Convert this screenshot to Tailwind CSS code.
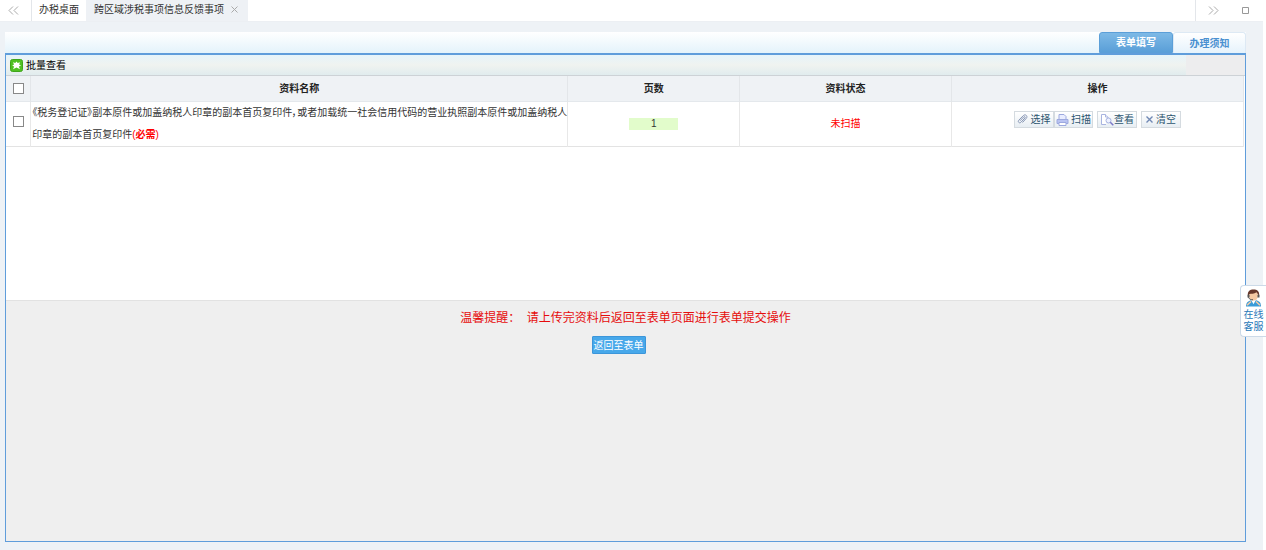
<!DOCTYPE html>
<html lang="zh-CN">
<head>
<meta charset="utf-8">
<meta name="viewport" content="width=device-width, initial-scale=1">
<title>跨区域涉税事项信息反馈事项</title>
<script src="https://cdn.jsdelivr.net/npm/@tailwindcss/browser@4"></script>
</head>
<body class="flex min-h-screen flex-col bg-[#eef2f6] font-['Liberation_Sans','Noto_Sans_CJK_SC',sans-serif] text-[10px] text-[#333]">
<div class="flex flex-1 flex-col border-r-3 border-white">
<header class="flex h-[22px] shrink-0 items-stretch border-b border-[#eceff3] bg-white">
  <button type="button" aria-label="向左滚动" class="flex w-8 items-center justify-center border-r border-[#e3e6ea] pr-1">
    <svg class="h-[9px] w-[11px]" viewBox="0 0 11 9" fill="none" stroke="#aaa"><path d="M5 .5 1 4.5l4 4M10 .5 6 4.5l4 4"/></svg>
  </button>
  <nav class="flex flex-1">
    <a href="#desktop" class="flex w-[54px] items-center justify-center whitespace-nowrap pb-0.5">办税桌面</a>
    <div class="flex w-[162px] items-center justify-between bg-[#eef1f5] pb-0.5 pl-2 pr-2.5">
      <a href="#current" class="whitespace-nowrap">跨区域涉税事项信息反馈事项</a>
      <button type="button" aria-label="关闭"><svg class="size-[7px]" viewBox="0 0 7 7" stroke="#aaa"><path d="m.5.5 6 6m0-6-6 6"/></svg></button>
    </div>
  </nav>
  <div class="flex w-[68px] items-center justify-between border-l border-[#e3e6ea] pl-3 pr-3.5">
    <button type="button" aria-label="向右滚动"><svg class="h-[9px] w-[11px]" viewBox="0 0 11 9" fill="none" stroke="#aaa"><path d="m1 .5 4 4-4 4M6 .5l4 4-4 4"/></svg></button>
    <button type="button" aria-label="最大化"><svg class="size-[7px]" viewBox="0 0 7 7" fill="none" stroke="#999"><path d="M.5.5h6v6h-6z"/></svg></button>
  </div>
</header>

<main class="ml-[5px] mr-[17px] mt-2.5 mb-2 flex flex-1 flex-col">
  <div class="flex h-[21px] items-stretch justify-end bg-linear-to-b from-white to-[#e4f3fb] font-['Liberation_Serif','Noto_Sans_CJK_SC',serif] font-bold">
    <button type="button" class="w-[74px] rounded-t-[3px] border border-[#5b9fd8] bg-linear-to-b from-[#7db9e6] to-[#5a9fd8] text-white">表单填写</button>
    <button type="button" class="w-[73px] rounded-t-[3px] border border-b-0 border-[#dde9f4] bg-linear-to-b from-white to-[#e6f3fc] text-[#4a90d0]">办理须知</button>
  </div>
  <section class="flex flex-1 flex-col border border-t-2 border-[#5f9ddb] bg-[#efefef]">
    <div class="flex h-[21px] border-b border-[#cdd2d6]">
      <div class="flex flex-1 items-center bg-linear-to-b from-[#e6f4fa] via-[#f0f3f0] to-[#e1ecee] pl-1">
        <button type="button" class="flex items-center gap-[3px] text-black">
          <svg class="size-[13px]" viewBox="0 0 13 13"><rect x=".5" y=".5" width="12" height="12" rx="2" fill="#4fc022" stroke="#3fa51c"/><path d="M3 3.200 5.300 4 6.500 2.400 7.700 4 10 3.200 9.200 5.500 11 6.700 8.800 7.500 10 10.300 6.500 8.500 3 10.300 4.200 7.500 2.200 6.700 4 5.500z" fill="#fff"/></svg>
          批量查看
        </button>
      </div>
      <div class="w-[59px] shrink-0 bg-[#ededee]"></div>
    </div>
    <div class="min-h-[225px] border-b border-[#e2e2e2] bg-white pr-px">
      <table class="w-full table-fixed border-collapse">
        <colgroup><col class="w-[2%]"><col class="w-[43.4%]"><col class="w-[13.9%]"><col class="w-[17.1%]"><col></colgroup>
        <thead>
          <tr class="h-[25px] border-b border-[#e4e8ec] bg-[#eff2f5] text-[#222]">
            <th class="border-r border-[#e3e6e9]"><input type="checkbox" aria-label="全选" class="mx-auto block size-[11px] appearance-none border border-[#888] bg-white checked:bg-[#4a90d0]"></th>
            <th class="border-r border-[#e3e6e9]">资料名称</th>
            <th class="border-r border-[#e3e6e9]">页数</th>
            <th class="border-r border-[#e3e6e9]">资料状态</th>
            <th class="border-r border-[#e3e6e9]">操作</th>
          </tr>
        </thead>
        <tbody>
          <tr class="h-[45px] border-b border-[#e3e3e3]">
            <td class="border-r border-[#e8e8e8] pb-1"><input type="checkbox" aria-label="选择此资料" class="mx-auto block size-[11px] appearance-none border border-[#888] bg-white checked:bg-[#4a90d0]"></td>
            <td class="whitespace-nowrap border-r border-[#e8e8e8] pl-px leading-[22px]"><span class="[font-feature-settings:'palt']">《税务登记证》副本原件或加盖纳税人印章的副本首页复印件，或者加载统一社会信用代码的营业执照副本原件或加盖纳税人</span><br>印章的副本首页复印件<span class="text-[#f00]">(<b>必需</b>)</span></td>
            <td class="border-r border-[#e8e8e8]"><input type="text" value="1" aria-label="页数" class="mx-auto block h-3 w-[49px] bg-[#e2fccb] text-center text-[10px]"></td>
            <td class="border-r border-[#e8e8e8] text-center text-[#f00]">未扫描</td>
            <td class="border-r border-[#e8e8e8] pb-2">
              <div class="flex justify-center text-[#2d5570]">
                <button type="button" class="flex h-[17px] w-10 items-center justify-center gap-0.5 border border-[#d5dbe0] bg-linear-to-b from-white to-[#e8eef3]">
                  <svg class="size-[11px] shrink-0" viewBox="0 0 11 11" fill="none" stroke="#8796b5"><path d="M3 6.800 6.700 3c1-1 2.100.1 1.200 1L4 8.200C2.500 9.800.3 7.800 1.800 6.200L6.300 1.600c2-2 4.900.5 3 2.700L5.500 8.500"/></svg>选择</button>
                <button type="button" class="flex h-[17px] w-[39px] items-center justify-center gap-0.5 border border-[#d5dbe0] bg-linear-to-b from-white to-[#e8eef3]">
                  <svg class="h-3 w-[13px] shrink-0" viewBox="0 0 13 12" fill="#e9edff" stroke="#9da9df"><path d="M3 6V.5h5L10 2.500V6"/><path d="M1 5.500h11v4H1z" fill="#b9c3f2"/><path d="M3 8.500h7v3H3z" fill="#fff"/></svg>扫描</button>
                <button type="button" class="ml-1 flex h-[17px] w-10 items-center justify-center border border-[#d5dbe0] bg-linear-to-b from-white to-[#e8eef3]">
                  <svg class="h-3 w-[14px] shrink-0" viewBox="0 0 14 12" fill="#fff" stroke="#a8b4e0"><path d="M6 10.500H1.500V.5h4L8 3v2"/><path d="M5.500.5V3H8"/><circle cx="8.500" cy="6.500" r="2.500" fill="#edf1ff"/><path d="m10.300 8.300 3 3" stroke="#7b78c8" stroke-width="1.500"/></svg>查看</button>
                <button type="button" class="ml-1 flex h-[17px] w-10 items-center justify-center gap-[3px] border border-[#d5dbe0] bg-linear-to-b from-white to-[#e8eef3]">
                  <svg class="size-[7px] shrink-0" viewBox="0 0 7 7" stroke="#7189b5" stroke-width="1.400"><path d="m.5.5 6 6m0-6-6 6"/></svg>清空</button>
              </div>
            </td>
          </tr>
        </tbody>
      </table>
    </div>
    <div class="flex flex-col items-center pt-2">
      <p class="text-xs leading-[18px] text-[#e60c0c]">温馨提醒：&nbsp; 请上传完资料后返回至表单页面进行表单提交操作</p>
      <button type="button" class="mt-[9px] mr-3.5 h-[18px] w-[54px] rounded-[1px] border border-[#3c96da] bg-[#47a8ea] text-white">返回至表单</button>
    </div>
  </section>
</main>
</div>

<a href="#service" class="fixed right-0 top-[285px] flex w-[26px] flex-col items-center rounded-l-[4px] border border-r-0 border-[#ccdae8] bg-white py-[3px] text-[10px] leading-3 text-[#2878b8]">
  <svg class="mb-0.5 h-[18px] w-[17px]" viewBox="0 0 17 20" preserveAspectRatio="none"><path d="M1 19.500c0-5 2.500-6 5-7h5c3 1 5 2 5 7z" fill="#399bd8"/><path d="m6 12 2.500 5 2.500-5z" fill="#fff"/><ellipse cx="8.500" cy="7.500" rx="4.500" ry="5.500" fill="#f5c9a3"/><path d="M3 8C2 2.500 5 .5 8.500.5s6.500 2 5.500 7.500C13 6 12.500 5 11.500 3.500 9 5.500 6 5 4.500 5.500z" fill="#66372a"/><path d="M3.500 6.500v3c1 2 2.500 2.500 4.500 2.500" fill="none" stroke="#444"/><path d="M2.500 6.500h2v3h-2zm10 0h2v3h-2z" fill="#555"/><path d="m2 18 4-4m9 4-4-4" stroke="#f5c9a3" stroke-width="1.500"/></svg>
  <span>在线</span><span>客服</span>
</a>
</body>
</html>
